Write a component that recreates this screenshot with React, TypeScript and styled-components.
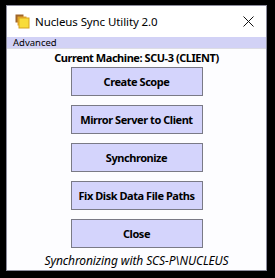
import React from "react";
import styled, { createGlobalStyle } from "styled-components";

const Global = createGlobalStyle`
  html, body { margin: 0; padding: 0; background: #000; }
  body { width: 275px; height: 278px; overflow: hidden; }
`;

const Frame = styled.div`
  padding: 5px 0 0 6px;
`;

const Window = styled.div`
  width: 259px;
  height: 264px;
  background: #fdfdff;
  border: 1px solid #8c8c9c;
  display: flex;
  flex-direction: column;
  font-family: "Noto Sans", "Open Sans", sans-serif;
  color: #000;
`;

const TitleBar = styled.div`
  height: 31px;
  display: flex;
  align-items: center;
  padding: 0 0 0 8px;
  background: #fff;
`;

const TitleText = styled.span`
  font-size: 11.5px;
  margin-left: 5px;
  flex: 1;
  letter-spacing: -0.1px;
`;

const CloseBox = styled.div`
  width: 32px;
  height: 31px;
  display: flex;
  align-items: center;
  justify-content: center;
  margin-right: 2px;
`;

const MenuBar = styled.div`
  height: 11px;
  background: #d2d2f6;
  display: flex;
  align-items: center;
  padding-left: 6px;
  font-size: 9.5px;
  line-height: 11px;
  border-bottom: 1px solid #dcdce4;
`;

const Content = styled.div`
  flex: 1;
  display: flex;
  flex-direction: column;
  align-items: center;
`;

const MachineLabel = styled.div`
  font-weight: 700;
  font-size: 11px;
  letter-spacing: -0.45px;
  height: 16px;
  line-height: 16px;
  margin-top: 1px;
`;

const ButtonStack = styled.div`
  display: flex;
  flex-direction: column;
  gap: 9px;
  margin-top: 1px;
`;

const ActionButton = styled.button`
  width: 132px;
  height: 29px;
  background: #d4d4fc;
  border: 1px solid #7a7a86;
  font-family: "Noto Sans", "Open Sans", sans-serif;
  font-weight: 700;
  font-size: 11px;
  letter-spacing: -0.45px;
  color: #000;
  padding: 0;
  cursor: pointer;
`;

const Status = styled.div`
  font-style: italic;
  font-size: 12px;
  letter-spacing: -0.1px;
  margin-top: 5px;
  line-height: 16px;
`;

const AppIcon = () => (
  <svg width="15" height="15" viewBox="0 0 15 15">
    <rect x="0.5" y="0.5" width="8" height="8" fill="#a0662a" />
    <rect x="2.5" y="2.5" width="9" height="9" fill="#e7a52a" />
    <rect x="4" y="4" width="10" height="10" fill="#f8dc3a" stroke="#d7a320" strokeWidth="1" />
  </svg>
);

const CloseIcon = () => (
  <svg width="11" height="11" viewBox="0 0 11 11">
    <path d="M0.5 0.5 L10.5 10.5 M10.5 0.5 L0.5 10.5" stroke="#111" strokeWidth="1" />
  </svg>
);

const buttons = [
  "Create Scope",
  "Mirror Server to Client",
  "Synchronize",
  "Fix Disk Data File Paths",
  "Close",
];

export default function App() {
  return (
    <>
      <Global />
      <Frame>
        <Window>
          <TitleBar>
            <AppIcon />
            <TitleText>Nucleus Sync Utility 2.0</TitleText>
            <CloseBox>
              <CloseIcon />
            </CloseBox>
          </TitleBar>
          <MenuBar>Advanced</MenuBar>
          <Content>
            <MachineLabel>Current Machine: SCU-3 (CLIENT)</MachineLabel>
            <ButtonStack>
              {buttons.map((b) => (
                <ActionButton key={b}>{b}</ActionButton>
              ))}
            </ButtonStack>
            <Status>Synchronizing with SCS-P\NUCLEUS</Status>
          </Content>
        </Window>
      </Frame>
    </>
  );
}
